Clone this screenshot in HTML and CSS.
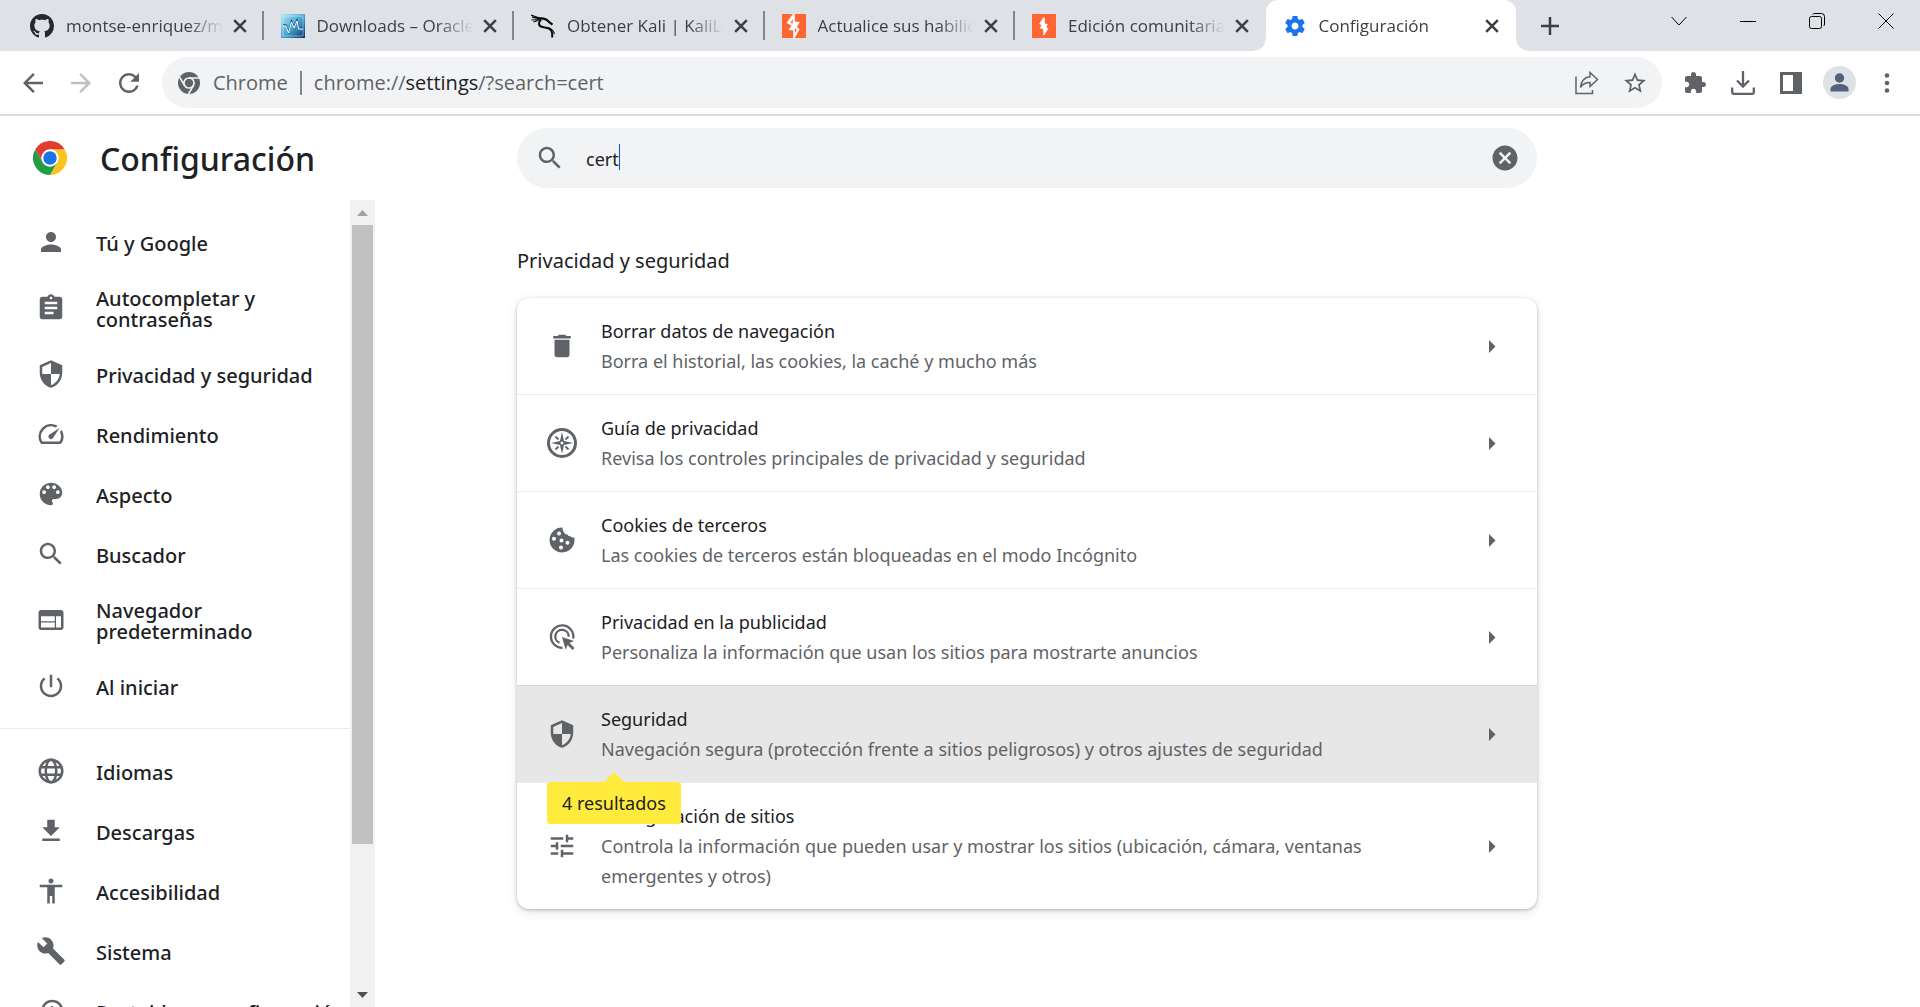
FILE: index.html
```html
<!DOCTYPE html>
<html lang="es">
<head>
<meta charset="utf-8">
<meta name="viewport" content="width=device-width, initial-scale=1">
<title>Configuración</title>
<link rel="stylesheet" href="styles.css">
</head>
<body>
<svg class="defs" aria-hidden="true">
  <symbol id="i-close" viewBox="0 0 12 12"><path d="M1 1l10 10M11 1L1 11" fill="none" stroke="#3c4043" stroke-width="2.2"/></symbol>
  <symbol id="i-person" viewBox="0 0 24 24"><path d="M12 12c2.21 0 4-1.79 4-4s-1.79-4-4-4-4 1.79-4 4 1.79 4 4 4zm0 2c-2.67 0-8 1.34-8 4v2h16v-2c0-2.66-5.33-4-8-4z"/></symbol>
  <symbol id="i-search" viewBox="0 0 24 24"><path d="M15.5 14h-.79l-.28-.27C15.41 12.59 16 11.11 16 9.5 16 5.91 13.09 3 9.5 3S3 5.91 3 9.5 5.91 16 9.5 16c1.61 0 3.09-.59 4.23-1.57l.27.28v.79l5 4.99L20.49 19l-4.99-5zm-6 0C7.01 14 5 11.99 5 9.5S7.01 5 9.5 5 14 7.01 14 9.5 11.99 14 9.5 14z"/></symbol>
  <symbol id="i-shield" viewBox="0 0 24 24"><path fill-rule="evenodd" d="M12 1L3 5v6c0 5.55 3.84 10.74 9 12 5.16-1.26 9-6.45 9-12V5l-9-4zM12 3.2V12H5V6.3zM12 12h7c-.53 4.12-3.28 7.79-7 8.94z"/></symbol>
  <symbol id="i-arrow" viewBox="0 0 7 13"><path d="M0 0l6.5 6.5L0 13z"/></symbol>
</svg>

<header class="browser">
  <div class="strip">
    <div class="tabs" role="tablist">
      <div class="tab">
        <svg class="favicon github" viewBox="0 0 16 16"><path d="M8 0C3.58 0 0 3.58 0 8c0 3.54 2.29 6.53 5.47 7.59.4.07.55-.17.55-.38 0-.19-.01-.82-.01-1.49-2.01.37-2.53-.49-2.69-.94-.09-.23-.48-.94-.82-1.13-.28-.15-.68-.52-.01-.53.63-.01 1.08.58 1.23.82.72 1.21 1.87.87 2.33.66.07-.52.28-.87.51-1.07-1.78-.2-3.64-.89-3.64-3.95 0-.87.31-1.59.82-2.15-.08-.2-.36-1.02.08-2.12 0 0 .67-.21 2.2.82.64-.18 1.32-.27 2-.27s1.36.09 2 .27c1.53-1.04 2.2-.82 2.2-.82.44 1.1.16 1.92.08 2.12.51.56.82 1.27.82 2.15 0 3.07-1.87 3.75-3.65 3.95.29.25.54.73.54 1.48 0 1.07-.01 1.93-.01 2.2 0 .21.15.46.55.38A8.01 8.01 0 0 0 16 8c0-4.42-3.58-8-8-8z"/></svg>
        <span class="tab-title">montse-enriquez/manual</span>
        <button class="tab-close" aria-label="Cerrar"><svg><use href="#i-close"/></svg></button>
      </div>
      <div class="tab">
        <svg class="favicon" viewBox="0 0 24 24"><defs><linearGradient id="vb" x1="0" y1="0" x2="1" y2="1"><stop offset="0" stop-color="#b9e8f5"/><stop offset=".5" stop-color="#4aa9d3"/><stop offset="1" stop-color="#03306e"/></linearGradient></defs><path fill="url(#vb)" d="M0 0h24v24H0z"/><path d="M2 2h20v20H2z" fill="none" stroke="#d8f2fa" stroke-opacity=".5"/><path d="M2 11h3l2.500 7 3-11 2.500 6 3-7 1.500 8H22" fill="none" stroke="#0d5c93" stroke-width="1.500"/><path d="M2 12h3l2.500 7 3-11 2.500 6 3-7 1.500 8H22" fill="none" stroke="#fff" stroke-width="1"/></svg>
        <span class="tab-title">Downloads – Oracle VM</span>
        <button class="tab-close" aria-label="Cerrar"><svg><use href="#i-close"/></svg></button>
      </div>
      <div class="tab">
        <svg class="favicon outline kali" viewBox="0 0 24 24"><path stroke-width="1.200" d="M0 1l10 3.500M1 3.200l8 1.800M.5 6l8-.5M2.500 8l6-2"/><path stroke-width="2.200" d="M8 4.500c4-.5 7 0 9.500 3l4 3.200"/><path stroke-width="1.200" d="M14 4.500l4 3.500"/><path stroke-width="2" d="M10 5.500C7 8.500 7 12 11.500 13c4 .8 7.500.5 9 4 .8 2 1 4 .7 6.500"/><path stroke-width="1.100" d="M17 13.500c3 1 5.500 3 6.500 6.500"/></svg>
        <span class="tab-title">Obtener Kali | KaliLinux</span>
        <button class="tab-close" aria-label="Cerrar"><svg><use href="#i-close"/></svg></button>
      </div>
      <div class="tab">
        <svg class="favicon" viewBox="0 0 24 24"><path fill="#ff6633" d="M0 0h24v24H0z"/><path fill="#fff" d="M10.800 0h2v7.500l5 .5-3 5 2.700 2-4.700 9h-1.600v-7.500L6.500 16l3-4.500L4.500 9z"/><path fill="#ff6633" d="M10.800 5v4.500L8.500 9zM12.800 19v-4.500l2 .7z"/></svg>
        <span class="tab-title">Actualice sus habilidades</span>
        <button class="tab-close" aria-label="Cerrar"><svg><use href="#i-close"/></svg></button>
      </div>
      <div class="tab">
        <svg class="favicon" viewBox="0 0 24 24"><path fill="#ff6633" d="M0 0h24v24H0z"/><path fill="#fff" d="M11.200 3.500h1.600v6l3 .5-1.500 3.200 2.200 1-4.100 6.800h-1.200v-6l-3.500-.5 1.800-3.500-2.300-1z"/></svg>
        <span class="tab-title">Edición comunitaria de</span>
        <button class="tab-close" aria-label="Cerrar"><svg><use href="#i-close"/></svg></button>
      </div>
      <div class="tab active">
        <svg class="favicon" viewBox="0 0 24 24"><path d="M19.430 12.980c.04-.32.07-.64.07-.98s-.03-.66-.07-.98l2.110-1.650c.19-.15.24-.42.12-.64l-2-3.460c-.12-.22-.39-.3-.61-.22l-2.490 1c-.52-.4-1.080-.73-1.690-.98l-.38-2.650C14.460 2.180 14.250 2 14 2h-4c-.25 0-.46.18-.49.42l-.38 2.650c-.61.25-1.170.59-1.690.98l-2.490-1c-.23-.09-.49 0-.61.22l-2 3.460c-.13.22-.07.49.12.64l2.110 1.650c-.04.32-.07.65-.07.98s.03.66.07.98l-2.110 1.650c-.19.15-.24.42-.12.64l2 3.460c.12.22.39.3.61.22l2.490-1c.52.4 1.080.73 1.690.98l.38 2.650c.03.24.24.42.49.42h4c.25 0 .46-.18.49-.42l.38-2.650c.61-.25 1.170-.59 1.690-.98l2.490 1c.23.09.49 0 .61-.22l2-3.460c.12-.22.07-.49-.12-.64l-2.110-1.650zM12 15.500c-1.930 0-3.500-1.570-3.500-3.500s1.570-3.500 3.500-3.500 3.500 1.570 3.500 3.500-1.570 3.500-3.500 3.500z"/></svg>
        <span class="tab-title">Configuración</span>
        <button class="tab-close" aria-label="Cerrar"><svg><use href="#i-close"/></svg></button>
      </div>
    </div>
    <button class="new-tab" aria-label="Nueva pestaña"><svg viewBox="0 0 18 18" width="18" height="18"><path d="M9 0v18M0 9h18" stroke="#3c4043" stroke-width="2.500"/></svg></button>
    <div class="window-buttons">
      <button aria-label="Buscar pestañas"><svg viewBox="0 0 16 16" width="16" height="16"><path d="M.5 4l7.500 8 7.500-8"/></svg></button>
      <button aria-label="Minimizar"><svg viewBox="0 0 16 16" width="16" height="16"><path d="M0 8.500h16"/></svg></button>
      <button aria-label="Restaurar"><svg viewBox="0 0 16 16" width="16" height="16"><rect x=".5" y="3.500" width="12" height="12" rx="2"/><path d="M3.500 1.500Q4 .5 6 .5h6.500a3 3 0 0 1 3 3V11q0 1.500-1 2"/></svg></button>
      <button aria-label="Cerrar ventana"><svg viewBox="0 0 16 16" width="16" height="16"><path d="M.5.500l15 15M15.500.500l-15 15"/></svg></button>
    </div>
  </div>

  <div class="toolbar">
    <div class="tools">
      <button aria-label="Atrás"><svg viewBox="0 0 24 24" width="30" height="30"><path d="M20 11H7.830l5.590-5.590L12 4l-8 8 8 8 1.410-1.410L7.830 13H20v-2z"/></svg></button>
      <button aria-label="Adelante" disabled><svg viewBox="0 0 24 24" width="30" height="30"><path d="M12 4l-1.410 1.410L16.170 11H4v2h12.170l-5.580 5.590L12 20l8-8z"/></svg></button>
      <button aria-label="Volver a cargar"><svg viewBox="0 0 24 24" width="30" height="30"><path d="M17.650 6.350A7.958 7.958 0 0 0 12 4c-4.420 0-7.990 3.580-7.990 8s3.570 8 7.990 8c3.730 0 6.840-2.550 7.730-6h-2.080A5.990 5.990 0 0 1 12 18c-3.310 0-6-2.690-6-6s2.690-6 6-6c1.660 0 3.140.69 4.220 1.780L13 11h7V4l-2.350 2.350z"/></svg></button>
    </div>
    <div class="omnibox">
      <svg viewBox="0 0 24 24" width="22" height="22"><circle cx="12" cy="12" r="12"/><g fill="none" stroke="#f1f3f4" stroke-width="1.800"><circle cx="12" cy="12" r="5.500"/><path d="M12 6.500h11M7.200 14.800L1.800 5.500M16.800 14.800L11.500 24"/></g></svg>
      <span class="chip">Chrome</span>
      <span class="url">chrome://<b>settings</b>/?search=cert</span>
      <button aria-label="Compartir"><svg class="outline" viewBox="0 0 24 24" width="24" height="24" stroke-width="1.500"><path d="M1 5.500V22.500h16.500V19"/><path d="M15 1.500l7.500 7L15 15.500v-4c-4.500 0-7.500 1.500-9.500 5 .5-6 3.500-10 9.500-10.700z"/></svg></button>
      <button aria-label="Añadir a marcadores"><svg viewBox="0 0 24 24" width="26" height="26"><path d="M22 9.240l-7.190-.62L12 2 9.190 8.630 2 9.240l5.460 4.730L5.820 21 12 17.270 18.180 21l-1.630-7.030L22 9.240zM12 15.400l-3.760 2.270 1-4.280-3.320-2.880 4.380-.38L12 6.100l1.710 4.040 4.380.38-3.320 2.880 1 4.280L12 15.400z"/></svg></button>
    </div>
    <div class="tools">
      <button aria-label="Extensiones"><svg viewBox="0 0 24 24" width="24" height="24"><path d="M20.500 11H19V7c0-1.100-.9-2-2-2h-4V3.500C13 2.120 11.880 1 10.500 1S8 2.120 8 3.500V5H4c-1.100 0-1.990.9-1.990 2v3.800H3.500c1.490 0 2.700 1.210 2.700 2.700s-1.210 2.700-2.700 2.700H2V20c0 1.100.9 2 2 2h3.800v-1.500c0-1.490 1.210-2.700 2.700-2.700 1.490 0 2.700 1.210 2.700 2.700V22H17c1.100 0 2-.9 2-2v-4h1.500c1.380 0 2.500-1.120 2.500-2.500S21.880 11 20.500 11z"/></svg></button>
      <button aria-label="Descargas"><svg class="outline" viewBox="0 0 24 24" width="24" height="24" stroke-width="2.300"><path d="M12 0v15M6 9.500l6 6 6-6M1.200 16.500v5q0 1.300 1.300 1.300h19q1.300 0 1.300-1.300v-5"/></svg></button>
      <button aria-label="Panel lateral"><svg viewBox="0 0 22 22" width="22" height="22"><path fill-rule="evenodd" d="M0 0h22v22H0zM3 3v16h10V3z"/></svg></button>
      <button aria-label="Perfil"><svg viewBox="0 0 33 33" width="33" height="33"><circle cx="16.500" cy="16.500" r="16.500" fill="#dee1e6"/><circle cx="16.500" cy="12" r="4.700" fill="#55617a"/><path fill="#55617a" d="M7.500 25.500v-2.500c0-3.500 5-5 9-5s9 1.500 9 5v2.500z"/></svg></button>
      <button aria-label="Menú"><svg viewBox="0 0 6 20" width="6" height="20"><circle cx="3" cy="2.500" r="2.300"/><circle cx="3" cy="10" r="2.300"/><circle cx="3" cy="17.500" r="2.300"/></svg></button>
    </div>
  </div>
</header>

<div class="settings">
  <div class="brand">
    <svg viewBox="0 0 48 48" width="34" height="34"><path fill="#e33b2e" d="M3.200 12A24 24 0 0 1 44.800 12H24a12 12 0 0 0-10.400 18z"/><path fill="#fcc31e" d="M44.800 12A24 24 0 0 1 24 48l10.400-18A12 12 0 0 0 24 12z"/><path fill="#249b46" d="M24 48A24 24 0 0 1 3.200 12l10.400 18a12 12 0 0 0 20.800 0z"/><circle cx="24" cy="24" r="12" fill="#fff"/><circle cx="24" cy="24" r="9.500" fill="#1a73e8"/></svg>
    <h1>Configuración</h1>
  </div>
  <label class="search">
    <svg viewBox="0 0 24 24" width="30" height="30"><use href="#i-search"/></svg>
    <span class="field"><input type="text" value="cert" aria-label="Buscar en Configuración"><span class="caret"></span></span>
    <button aria-label="Borrar búsqueda"><svg viewBox="0 0 24 24" width="30" height="30"><path d="M12 2C6.470 2 2 6.470 2 12s4.470 10 10 10 10-4.470 10-10S17.530 2 12 2zm5 13.590L15.590 17 12 13.410 8.410 17 7 15.590 10.590 12 7 8.410 8.410 7 12 10.590 15.590 7 17 8.410 13.410 12 17 15.590z"/></svg></button>
  </label>

  <aside class="sidebar">
    <nav class="menu">
      <a href="#"><svg><use href="#i-person"/></svg><span>Tú y Google</span></a>
      <a href="#" class="tall"><svg viewBox="0 0 24 24"><path d="M19 3h-4.180C14.400 1.840 13.300 1 12 1c-1.300 0-2.400.84-2.820 2H5c-1.100 0-2 .9-2 2v14c0 1.100.9 2 2 2h14c1.100 0 2-.9 2-2V5c0-1.100-.9-2-2-2zm-7 0c.55 0 1 .45 1 1s-.45 1-1 1-1-.45-1-1 .45-1 1-1zm2 14H7v-2h7v2zm3-4H7v-2h10v2zm0-4H7V7h10v2z"/></svg><span>Autocompletar y contraseñas</span></a>
      <a href="#"><svg><use href="#i-shield"/></svg><span>Privacidad y seguridad</span></a>
      <a href="#"><svg viewBox="0 0 24 24"><path d="M20.380 8.570l-1.230 1.850a8 8 0 0 1-.22 7.580H5.070A8 8 0 0 1 15.580 6.850l1.850-1.230A10 10 0 0 0 3.350 19a2 2 0 0 0 1.720 1h13.850a2 2 0 0 0 1.740-1 10 10 0 0 0-.27-10.440zM10.590 15.410a2 2 0 0 0 2.830 0l5.660-8.490-8.490 5.660a2 2 0 0 0 0 2.830z"/></svg><span>Rendimiento</span></a>
      <a href="#"><svg viewBox="0 0 24 24"><path d="M12 3c-4.970 0-9 4.030-9 9s4.030 9 9 9c.83 0 1.500-.67 1.500-1.500 0-.39-.15-.74-.39-1.010-.23-.26-.38-.61-.38-.99 0-.83.67-1.500 1.500-1.500H16c2.760 0 5-2.240 5-5 0-4.420-4.030-8-9-8zm-5.500 9c-.83 0-1.500-.67-1.500-1.500S5.670 9 6.500 9 8 9.670 8 10.500 7.330 12 6.500 12zm3-4C8.670 8 8 7.330 8 6.500S8.670 5 9.500 5s1.500.67 1.500 1.500S10.330 8 9.500 8zm5 0c-.83 0-1.500-.67-1.500-1.500S13.670 5 14.500 5s1.500.67 1.500 1.500S15.330 8 14.500 8zm3 4c-.83 0-1.500-.67-1.500-1.500S16.670 9 17.500 9s1.500.67 1.500 1.500-.67 1.500-1.500 1.500z"/></svg><span>Aspecto</span></a>
      <a href="#"><svg><use href="#i-search"/></svg><span>Buscador</span></a>
      <a href="#" class="tall"><svg viewBox="0 0 24 24"><path d="M20 4H4c-1.100 0-1.990.9-1.990 2L2 18c0 1.100.9 2 2 2h16c1.100 0 2-.9 2-2V6c0-1.100-.9-2-2-2zm-5 14H4v-4h11v4zm0-5H4V9h11v4zm5 5h-4V9h4v9z"/></svg><span>Navegador predeterminado</span></a>
      <a href="#"><svg viewBox="0 0 24 24"><path d="M13 3h-2v10h2V3zm4.830 2.170l-1.420 1.420C17.990 7.860 19 9.810 19 12c0 3.870-3.130 7-7 7s-7-3.130-7-7c0-2.190 1.010-4.140 2.580-5.420L6.170 5.170C4.230 6.820 3 9.260 3 12c0 4.970 4.030 9 9 9s9-4.030 9-9c0-2.740-1.230-5.180-3.170-6.830z"/></svg><span>Al iniciar</span></a>
      <hr>
      <a href="#"><svg viewBox="0 0 24 24" class="outline" stroke-width="2"><circle cx="12" cy="12" r="9"/><ellipse cx="12" cy="12" rx="4.200" ry="9"/><path d="M3.500 9h17M3.500 15h17"/></svg><span>Idiomas</span></a>
      <a href="#"><svg viewBox="0 0 24 24"><path d="M19 9h-4V3H9v6H5l7 7 7-7zM5 18v2h14v-2H5z"/></svg><span>Descargas</span></a>
      <a href="#"><svg viewBox="0 0 24 24"><path d="M12 2c1.100 0 2 .9 2 2s-.9 2-2 2-2-.9-2-2 .9-2 2-2zm9 7h-6v13h-2v-6h-2v6H9V9H3V7h18v2z"/></svg><span>Accesibilidad</span></a>
      <a href="#"><svg viewBox="0 0 24 24"><path d="M22.700 19l-9.100-9.100c.9-2.300.4-5-1.500-6.900-2-2-5-2.400-7.400-1.300L9 6 6 9 1.600 4.700C.4 7.100.9 10.100 2.900 12.100c1.900 1.900 4.600 2.400 6.900 1.500l9.100 9.100c.4.4 1 .4 1.400 0l2.300-2.300c.5-.4.5-1.100.1-1.400z"/></svg><span>Sistema</span></a>
      <a href="#"><svg viewBox="0 0 24 24"><path d="M13 3a9 9 0 0 0-9 9H1l3.890 3.890.07.14L9 12H6c0-3.870 3.130-7 7-7s7 3.130 7 7-3.130 7-7 7c-1.930 0-3.680-.79-4.940-2.060l-1.420 1.420A8.954 8.954 0 0 0 13 21a9 9 0 0 0 0-18zm-1 5v5l4.280 2.540.72-1.210-3.500-2.080V8H12z"/></svg><span>Restablecer configuración</span></a>
    </nav>
    <div class="scrollbar">
      <button aria-label="Subir" disabled><svg viewBox="0 0 11 6" width="11" height="6"><path d="M0 6l5.500-6L11 6z"/></svg></button>
      <div class="track"></div>
      <button aria-label="Bajar"><svg viewBox="0 0 11 6" width="11" height="6"><path d="M0 0l5.500 6L11 0z"/></svg></button>
    </div>
  </aside>

  <main class="content">
    <h2>Privacidad y seguridad</h2>
    <div class="card">
      <a class="row" href="#">
        <svg class="row-icon" viewBox="0 0 24 24"><path d="M6 19c0 1.100.9 2 2 2h8c1.100 0 2-.9 2-2V7H6v12zM19 4h-3.500l-1-1h-5l-1 1H5v2h14V4z"/></svg>
        <span class="row-text"><span class="row-title">Borrar datos de navegación</span><span>Borra el historial, las cookies, la caché y mucho más</span></span>
        <svg class="chevron"><use href="#i-arrow"/></svg>
      </a>
      <a class="row" href="#">
        <svg class="row-icon" viewBox="0 0 30 30"><circle cx="15" cy="15" r="13.500" fill="none" stroke="#5f6368" stroke-width="3"/><path fill-rule="evenodd" d="M15 4l2 9 9 2-9 2-2 9-2-9-9-2 9-2zM15 13.500a1.500 1.500 0 1 0 0 3 1.500 1.500 0 0 0 0-3z"/><path d="M8.500 8.500l3 3M21.500 8.500l-3 3M8.500 21.500l3-3M21.500 21.500l-3-3" stroke="#5f6368" stroke-width="1.800"/></svg>
        <span class="row-text"><span class="row-title">Guía de privacidad</span><span>Revisa los controles principales de privacidad y seguridad</span></span>
        <svg class="chevron"><use href="#i-arrow"/></svg>
      </a>
      <a class="row" href="#">
        <svg class="row-icon" viewBox="0 0 30 30"><path fill-rule="evenodd" d="M15.500 2.500A12.500 12.500 0 1 0 27.500 14.500v-2q-2.500.5-3.700-1-2 .3-3.500-2-2.700 0-3.800-3.300-1.200-.7-1-3.700zM12 6.600a2 2 0 1 1 0 4 2 2 0 0 1 0-4zM7 11.800a2 2 0 1 1 0 4 2 2 0 0 1 0-4zM14.500 13.500a2 2 0 1 1 0 4 2 2 0 0 1 0-4zM20.500 15.700a2 2 0 1 1 0 4 2 2 0 0 1 0-4zM14 20.500a2 2 0 1 1 0 4 2 2 0 0 1 0-4z"/></svg>
        <span class="row-text"><span class="row-title">Cookies de terceros</span><span>Las cookies de terceros están bloqueadas en el modo Incógnito</span></span>
        <svg class="chevron"><use href="#i-arrow"/></svg>
      </a>
      <a class="row" href="#">
        <svg class="row-icon" viewBox="0 0 30 30"><g fill="none" stroke="#5f6368" stroke-width="2.300"><path d="M15.500 25.800A11.200 11.200 0 1 1 26.200 16.500"/><path d="M12.500 20.800A6.700 6.700 0 1 1 21.700 14.800"/></g><path d="M15 15l12 4-4.500 2 5 5-1.900 1.900-5-5-2 4.600z"/></svg>
        <span class="row-text"><span class="row-title">Privacidad en la publicidad</span><span>Personaliza la información que usan los sitios para mostrarte anuncios</span></span>
        <svg class="chevron"><use href="#i-arrow"/></svg>
      </a>
      <a class="row hover" href="#">
        <svg class="row-icon"><use href="#i-shield"/></svg>
        <span class="row-text"><span class="row-title">Seguridad</span><span>Navegación segura (protección frente a sitios peligrosos) y otros ajustes de seguridad</span></span>
        <svg class="chevron"><use href="#i-arrow"/></svg>
        <span class="bubble">4 resultados</span>
      </a>
      <a class="row" href="#">
        <svg class="row-icon" viewBox="0 0 24 24"><path d="M3 17v2h6v-2H3zM3 5v2h10V5H3zm10 16v-2h8v-2h-8v-2h-2v6h2zM7 9v2H3v2h4v2h2V9H7zm14 4v-2H11v2h10zm-6-4h2V7h4V5h-4V3h-2v6z"/></svg>
        <span class="row-text"><span class="row-title">Configuración de sitios</span><span>Controla la información que pueden usar y mostrar los sitios (ubicación, cámara, ventanas emergentes y otros)</span></span>
        <svg class="chevron"><use href="#i-arrow"/></svg>
      </a>
    </div>
  </main>
</div>
</body>
</html>
```
FILE: styles.css
```css
* { box-sizing: border-box; }

body {
  margin: 0;
  height: 100vh;
  display: flex;
  flex-direction: column;
  overflow: hidden;
  background: #fff;
  color: #202124;
  font: 18px/30px "Segoe UI", "Noto Sans", "Open Sans", sans-serif;
}

svg { display: block; flex: none; fill: #5f6368; }
.outline { fill: none; stroke: #5f6368; }
.defs { position: absolute; width: 0; height: 0; }
a { color: inherit; text-decoration: none; }
button {
  display: flex;
  align-items: center;
  justify-content: center;
  padding: 0;
  border: 0;
  background: none;
  font: inherit;
}

/* Tab strip */
.strip {
  display: flex;
  height: 51px;
  padding-left: 13px;
  background: #dee1e6;
}
.tabs {
  flex: 0 1 1503px;
  display: grid;
  grid-template-columns: repeat(6, minmax(0, 1fr));
}
.tab {
  display: flex;
  align-items: center;
  padding: 0 12px 0 17px;
  background: linear-gradient(#80868b, #80868b) right / 2px 29px no-repeat;
  font-family: "Segoe UI", "Open Sans", "Noto Sans", sans-serif;
  font-size: 17px;
  color: #3c4043;
}
.tab:nth-child(5) { background: none; }
.tab.active {
  position: relative;
  background: #fff;
  border-radius: 12px 12px 0 0;
}
.tab.active::before,
.tab.active::after {
  content: "";
  position: absolute;
  bottom: 0;
  width: 12px;
  height: 12px;
}
.tab.active::before { right: 100%; background: radial-gradient(circle at 0 0, transparent 11px, #fff 12px); }
.tab.active::after { left: 100%; background: radial-gradient(circle at 100% 0, transparent 11px, #fff 12px); }
.favicon { width: 24px; height: 24px; margin-right: 12px; }
.favicon.github { fill: #24292f; }
.favicon.kali { stroke: #0b0b0b; }
.tab.active .favicon { fill: #1a73e8; }
.tab-title {
  flex: 1;
  overflow: hidden;
  white-space: nowrap;
  mask-image: linear-gradient(90deg, #000 calc(100% - 36px), transparent);
}
.tab-close { width: 24px; height: 24px; margin-left: 5px; }
.tab-close svg { width: 14px; height: 14px; }
.new-tab { width: 48px; margin-left: 10px; }
.window-buttons { display: flex; margin-left: auto; }
.window-buttons button { width: 69px; height: 42px; }
.window-buttons svg { fill: none; stroke: #000; }

/* Toolbar */
.toolbar {
  display: flex;
  align-items: center;
  gap: 9px;
  padding: 6px 9px;
  border-bottom: 2px solid #dadce0;
}
.tools { display: flex; }
.tools button { width: 48px; height: 48px; }
.tools button:disabled { opacity: .4; }
.omnibox {
  flex: 1;
  display: flex;
  align-items: center;
  height: 51px;
  padding: 0 3px 0 16px;
  border-radius: 26px;
  background: #f1f3f4;
  color: #5f6368;
  font-family: "Segoe UI", "Open Sans", "Noto Sans", sans-serif;
  font-size: 20px;
}
.omnibox button { width: 48px; height: 48px; }
.chip { margin: 0 12px 0 13px; padding-right: 12px; border-right: 2px solid #80868b; line-height: 24px; }
.url { flex: 1; }
.url b { color: #202124; font-weight: 400; }

/* Settings page */
.settings {
  flex: 1;
  min-height: 0;
  display: grid;
  grid-template-columns: 375px minmax(24px, 142fr) minmax(0, 1020px) minmax(24px, 383fr);
  grid-template-rows: 84px minmax(0, 1fr);
}
.brand { display: flex; align-items: center; gap: 33px; padding-left: 33px; }
h1 { margin: 2px 0 0; font-size: 32px; line-height: 40px; font-weight: 500; }
.search {
  grid-column: 3;
  align-self: center;
  display: flex;
  align-items: center;
  height: 60px;
  padding: 0 17px 0 18px;
  border-radius: 30px;
  background: #f1f3f4;
}
.field { position: relative; flex: 1; display: flex; margin-left: 21px; }
.field input {
  width: 100%;
  padding: 2px 0 0;
  border: 0;
  outline: 0;
  background: none;
  color: #202124;
  font: inherit;
}
.caret {
  position: absolute;
  top: 2px;
  left: 33px;
  width: 1px;
  height: 26px;
  background: #0b57d0;
}

/* Sidebar */
.sidebar { grid-column: 1; display: flex; min-height: 0; }
.menu { flex: 1; padding-top: 12px; overflow: hidden; }
.menu a {
  display: flex;
  align-items: center;
  gap: 30px;
  height: 60px;
  padding: 2px 15px 0 36px;
  font-size: 20px;
  line-height: 21px;
  font-weight: 500;
}
.menu a.tall { height: 72px; padding-right: 60px; }
.menu a:last-child { white-space: nowrap; }
.menu svg { width: 30px; height: 30px; margin-bottom: 2px; }
.menu hr { margin: 12px 0; border: 0; border-top: 1px solid #e8eaed; }
.scrollbar { width: 25px; display: flex; flex-direction: column; background: #f1f1f1; }
.scrollbar button { height: 25px; }
.scrollbar svg { fill: #505050; }
.scrollbar button:disabled svg { fill: #a3a3a3; }
.track { flex: 1; display: flex; flex-direction: column; padding: 0 2px; }
.track::before { content: ""; flex: 9; background: #c1c1c1; }
.track::after { content: ""; flex: 2; }

/* Results */
.content { grid-column: 3; }
h2 { margin: 46px 0 22px; font-size: 20px; line-height: 30px; font-weight: 400; }
.card {
  border-radius: 12px;
  background: #fff;
  box-shadow: 0 1px 3px rgba(60, 64, 67, .3), 0 3px 10px rgba(60, 64, 67, .15);
}
.row {
  position: relative;
  display: flex;
  align-items: center;
  padding: 18px 41px 18px 30px;
  color: #5f6368;
}
.row + .row { border-top: 1px solid #ebebeb; }
.row.hover { background: #e7e7e7; border-top-color: #d6d7d8; }
.row-icon { width: 30px; height: 30px; margin-right: 24px; }
.row-text { flex: 1; max-width: 800px; display: flex; flex-direction: column; }
.row-title { color: #202124; }
.chevron { width: 7px; height: 13px; margin-left: auto; }
.bubble {
  position: absolute;
  z-index: 1;
  top: 100%;
  left: 30px;
  padding: 6px 15px;
  border-radius: 3px;
  background: #ffeb3b;
  color: #202124;
}
.bubble::before {
  content: "";
  position: absolute;
  bottom: 100%;
  left: 50%;
  border: solid transparent;
  border-width: 0 10px 10px;
  border-bottom-color: #ffeb3b;
  transform: translateX(-50%);
}
```
